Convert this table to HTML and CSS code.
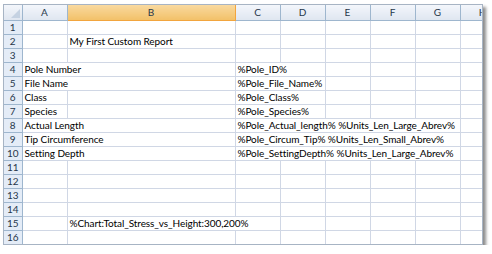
FILE: index.html
```html
<!DOCTYPE html>
<html lang="en">
<head>
    <meta charset="UTF-8">
    <title>My First Custom Report</title>
    <link rel="stylesheet" href="styles.css">
</head>
<body>
    <div class="sheet">
        <table class="grid">
            <colgroup>
                <col class="col-num">
                <col class="col-a">
                <col class="col-b">
                <col class="col-std">
                <col class="col-std">
                <col class="col-std">
                <col class="col-std">
                <col class="col-std">
                <col class="col-std">
            </colgroup>
            <thead>
                <tr>
                    <th class="corner"><span class="corner-mark"></span></th>
                    <th>A</th>
                    <th class="selected">B</th>
                    <th>C</th>
                    <th>D</th>
                    <th>E</th>
                    <th>F</th>
                    <th>G</th>
                    <th>H</th>
                </tr>
            </thead>
            <tbody>
                <tr><th>1</th><td></td><td></td><td></td><td></td><td></td><td></td><td></td><td></td></tr>
                <tr><th>2</th><td></td><td>My First Custom Report</td><td></td><td></td><td></td><td></td><td></td><td></td></tr>
                <tr><th>3</th><td></td><td></td><td></td><td></td><td></td><td></td><td></td><td></td></tr>
                <tr><th>4</th><td colspan="2">Pole Number</td><td colspan="2">%Pole_ID%</td><td></td><td></td><td></td><td></td></tr>
                <tr><th>5</th><td colspan="2">File Name</td><td colspan="2">%Pole_File_Name%</td><td></td><td></td><td></td><td></td></tr>
                <tr><th>6</th><td>Class</td><td></td><td colspan="2">%Pole_Class%</td><td></td><td></td><td></td><td></td></tr>
                <tr><th>7</th><td>Species</td><td></td><td colspan="2">%Pole_Species%</td><td></td><td></td><td></td><td></td></tr>
                <tr><th>8</th><td colspan="2">Actual Length</td><td colspan="5">%Pole_Actual_length% %Units_Len_Large_Abrev%</td><td></td></tr>
                <tr><th>9</th><td colspan="2">Tip Circumference</td><td colspan="5">%Pole_Circum_Tip% %Units_Len_Small_Abrev%</td><td></td></tr>
                <tr><th>10</th><td colspan="2">Setting Depth</td><td colspan="5">%Pole_SettingDepth% %Units_Len_Large_Abrev%</td><td></td></tr>
                <tr><th>11</th><td></td><td></td><td></td><td></td><td></td><td></td><td></td><td></td></tr>
                <tr><th>12</th><td></td><td></td><td></td><td></td><td></td><td></td><td></td><td></td></tr>
                <tr><th>13</th><td></td><td></td><td></td><td></td><td></td><td></td><td></td><td></td></tr>
                <tr><th>14</th><td></td><td></td><td></td><td></td><td></td><td></td><td></td><td></td></tr>
                <tr><th>15</th><td></td><td colspan="2">%Chart:Total_Stress_vs_Height:300,200%</td><td></td><td></td><td></td><td></td><td></td></tr>
                <tr><th>16</th><td></td><td></td><td></td><td></td><td></td><td></td><td></td><td></td></tr>
            </tbody>
        </table>
    </div>
</body>
</html>
```

FILE: styles.css
```css
* {
    margin: 0;
    padding: 0;
    box-sizing: border-box;
}

body {
    background: white;
    font-family: Lato, 'Open Sans', sans-serif;
    padding: 4px 0 0 3px;
}

.sheet {
    width: 480px;
    height: 241px;
    overflow: hidden;
    border: 1px solid #a7b4c4;
    box-shadow: 3px 3px 3px rgba(0,0,0,0.45);
    background: white;
}

.grid {
    border-collapse: collapse;
    table-layout: fixed;
    width: 501px;
    font-size: 10px;
    letter-spacing: -0.08px;
    color: #000;
}

.col-num { width: 18px; }
.col-a { width: 45px; }
.col-b { width: 168px; }
.col-std { width: 45px; }

.grid th,
.grid td {
    height: 14px;
    line-height: 12px;
    white-space: nowrap;
}

.grid td {
    border: 1px solid #d0d7e5;
    padding: 0 0 0 2px;
}

.grid thead th {
    height: 15px;
    font-weight: normal;
    font-size: 10px;
    letter-spacing: 0;
    color: #27374a;
    text-align: center;
    background: linear-gradient(#f3f6fb, #dfe6f0);
    border: 1px solid #9eb6ce;
    border-top: none;
}

.grid thead th.selected {
    background: linear-gradient(#f9d99f, #f2c169);
    border-color: #f2a53e;
}

.grid thead th.corner {
    position: relative;
    border-left: none;
}

.corner-mark {
    position: absolute;
    right: 2px;
    bottom: 2px;
    width: 0;
    height: 0;
    border-left: 9px solid transparent;
    border-bottom: 9px solid #c5d2e2;
}

.grid tbody th {
    font-weight: normal;
    font-size: 10px;
    letter-spacing: 0;
    color: #27374a;
    text-align: center;
    background: #e4ecf7;
    border: 1px solid #9eb6ce;
    border-left: none;
}
```
